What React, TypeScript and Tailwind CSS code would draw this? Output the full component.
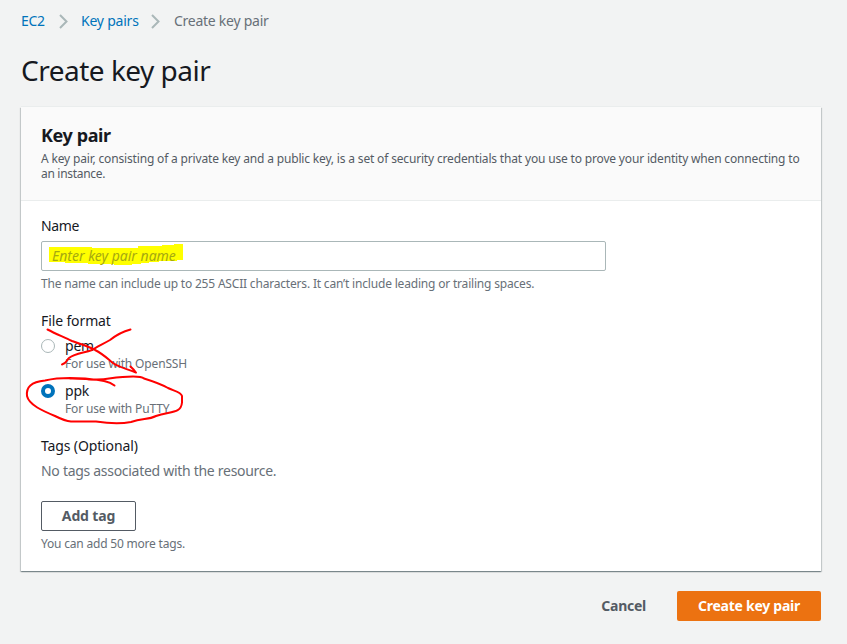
import React from 'react';

function Chevron() {
  return (
    <svg width="9" height="15" viewBox="0 0 9 15" fill="none" stroke="#aab7b8" strokeWidth="2" className="shrink-0">
      <path d="M1 1 L7.5 7.5 L1 14" />
    </svg>
  );
}

function RadioOption({ label, hint, checked }: { label: string; hint: string; checked?: boolean }) {
  return (
    <div className="flex h-9">
      <span
        className={
          checked
            ? 'mt-1 size-3.5 shrink-0 rounded-full border-4 border-[#0073bb] bg-white'
            : 'mt-1 size-3.5 shrink-0 rounded-full border border-[#aab7b8] bg-white'
        }
      />
      <div className="ml-2.5">
        <div className="text-sm leading-[22px] tracking-[-0.2px]">{label}</div>
        <div className="-mt-px text-xs leading-[15px] tracking-[-0.15px] text-[#687078]">{hint}</div>
      </div>
    </div>
  );
}

function Annotations() {
  return (
    <svg
      className="pointer-events-none absolute top-[220px] left-0"
      width="180"
      height="100"
      viewBox="21 327 180 100"
      fill="none"
      stroke="#ff0000"
      strokeWidth="2"
      strokeLinecap="round"
      strokeLinejoin="round"
    >
      <path d="M47.500 329.500 C56 334 64 337 72 341 C80 344 88 346 95 350 C103 354 108 359 113 363 C120 368 128 369 136 372.500 L134 370 L130.500 366.500" />
      <path d="M130.500 329.500 C121 332 115 336 110 340 C103 344 97 347 92 350 C84 353 75 353 69 358 C66 361 67 363 62 364.500" />
      <path d="M114.500 385.500 C109 381 99 379.500 88 379.500 M102 380.500 C84 378 63 376.500 45 380.500 C31 382 26 387 27 396 C29 405 43 411 55 416 C61 419 65 421 71 421.500 L96 421.500 C106 423 120 424 131 422 C143 418 148 420 156 416 C170 411 181 414 182 402.500 L182 396 C181 392 174 391 168 388 C161 384 152 381 144 378.500 C140 375 121 377 109 378.500 C96 381 83 378 70 378.500" />
    </svg>
  );
}

export default function App() {
  return (
    <main className="h-[644px] w-[847px] overflow-hidden bg-[#f2f3f3] pl-[21px] font-['Noto_Sans',sans-serif] text-sm text-[#16191f]">
      <nav className="flex h-[42px] items-center">
        <a className="w-[38px] tracking-[-0.3px] whitespace-nowrap text-[#0073bb]">EC2</a>
        <Chevron />
        <a className="ml-[13px] w-[70px] tracking-[-0.22px] whitespace-nowrap text-[#0073bb]">Key pairs</a>
        <Chevron />
        <span className="ml-3.5 tracking-[-0.26px] whitespace-nowrap text-[#687078]">Create key pair</span>
      </nav>
      <h1 className="flex h-[65px] items-center pb-[9px] text-[28px] leading-9 tracking-[-0.5px] whitespace-nowrap">
        <span>Create key pair</span>
      </h1>
      <section className="relative h-[464px] w-[800px] bg-white shadow-[0_1px_1px_0_rgba(0,28,36,0.3),1px_1px_1px_0_rgba(0,28,36,0.15),-1px_1px_1px_0_rgba(0,28,36,0.15),0_-1px_0_0_#eaeded]">
        <header className="h-[94px] border-b border-[#eaeded] bg-[#fafafa] px-5 pt-[17px]">
          <h2 className="text-lg leading-[22px] font-bold tracking-[-0.4px]">
            <span>Key pair</span>
          </h2>
          <p className="mt-[5px] text-xs leading-[15px] tracking-[-0.168px] whitespace-nowrap text-[#545b64]">
            <span>A key pair, consisting of a private key and a public key, is a set of security credentials that you use to prove your identity when connecting to</span>
            <br />
            <span className="tracking-[-0.3px]">an instance.</span>
          </p>
        </header>
        <div className="px-5 pt-3.5">
          <div className="leading-[22px] tracking-[-0.4px]"><span>Name</span></div>
          <div className="mt-1 flex h-[30px] w-[565px] items-center rounded-[2px] border border-[#aab7b8] bg-white">
            <div className="relative ml-[7px] h-6 w-[136px]">
              <svg className="absolute inset-0" width="136" height="24" viewBox="0 0 136 24" fill="#ffff00">
                <path d="M0 3h43v1h46v-2h24v-1h12v-1h9v16h-6v1h-18v1h-10v1h-8v1h-9v1H65v-1H39v-1H16v-1H0z" />
              </svg>
              <span className="absolute top-px left-[3px] leading-[22px] whitespace-nowrap text-[#a6a910] italic">Enter key pair name</span>
            </div>
          </div>
          <div className="mt-[5px] text-xs leading-[15px] tracking-[-0.186px] text-[#687078]">
            <span>The name can include up to 255 ASCII characters. It can’t include leading or trailing spaces.</span>
          </div>
          <div className="mt-[19px] leading-[22px] tracking-[-0.12px]"><span>File format</span></div>
          <div className="mt-[3px] flex flex-col gap-[9px]">
            <RadioOption label="pem" hint="For use with OpenSSH" />
            <RadioOption label="ppk" hint="For use with PuTTY" checked />
          </div>
          <div className="mt-[19px] leading-[22px] tracking-[-0.13px]"><span>Tags (Optional)</span></div>
          <div className="mt-[3px] leading-[22px] tracking-[-0.29px] text-[#687078]"><span>No tags associated with the resource.</span></div>
          <button className="mt-[19px] flex h-[30px] w-[95px] items-center justify-center rounded-[2px] border border-[#545b64] font-bold tracking-[-0.15px] text-[#545b64]">
            <span>Add tag</span>
          </button>
          <div className="mt-[5px] text-xs leading-[15px] tracking-[-0.2px] text-[#687078]"><span>You can add 50 more tags.</span></div>
        </div>
        <Annotations />
      </section>
      <footer className="mt-5 flex h-[30px] w-[800px] items-center justify-end gap-[31px] font-bold tracking-[-0.25px]">
        <button className="whitespace-nowrap text-[#545b64]">Cancel</button>
        <button className="h-[30px] w-[144px] rounded-[2px] bg-[#ec7211] whitespace-nowrap text-white">Create key pair</button>
      </footer>
    </main>
  );
}
